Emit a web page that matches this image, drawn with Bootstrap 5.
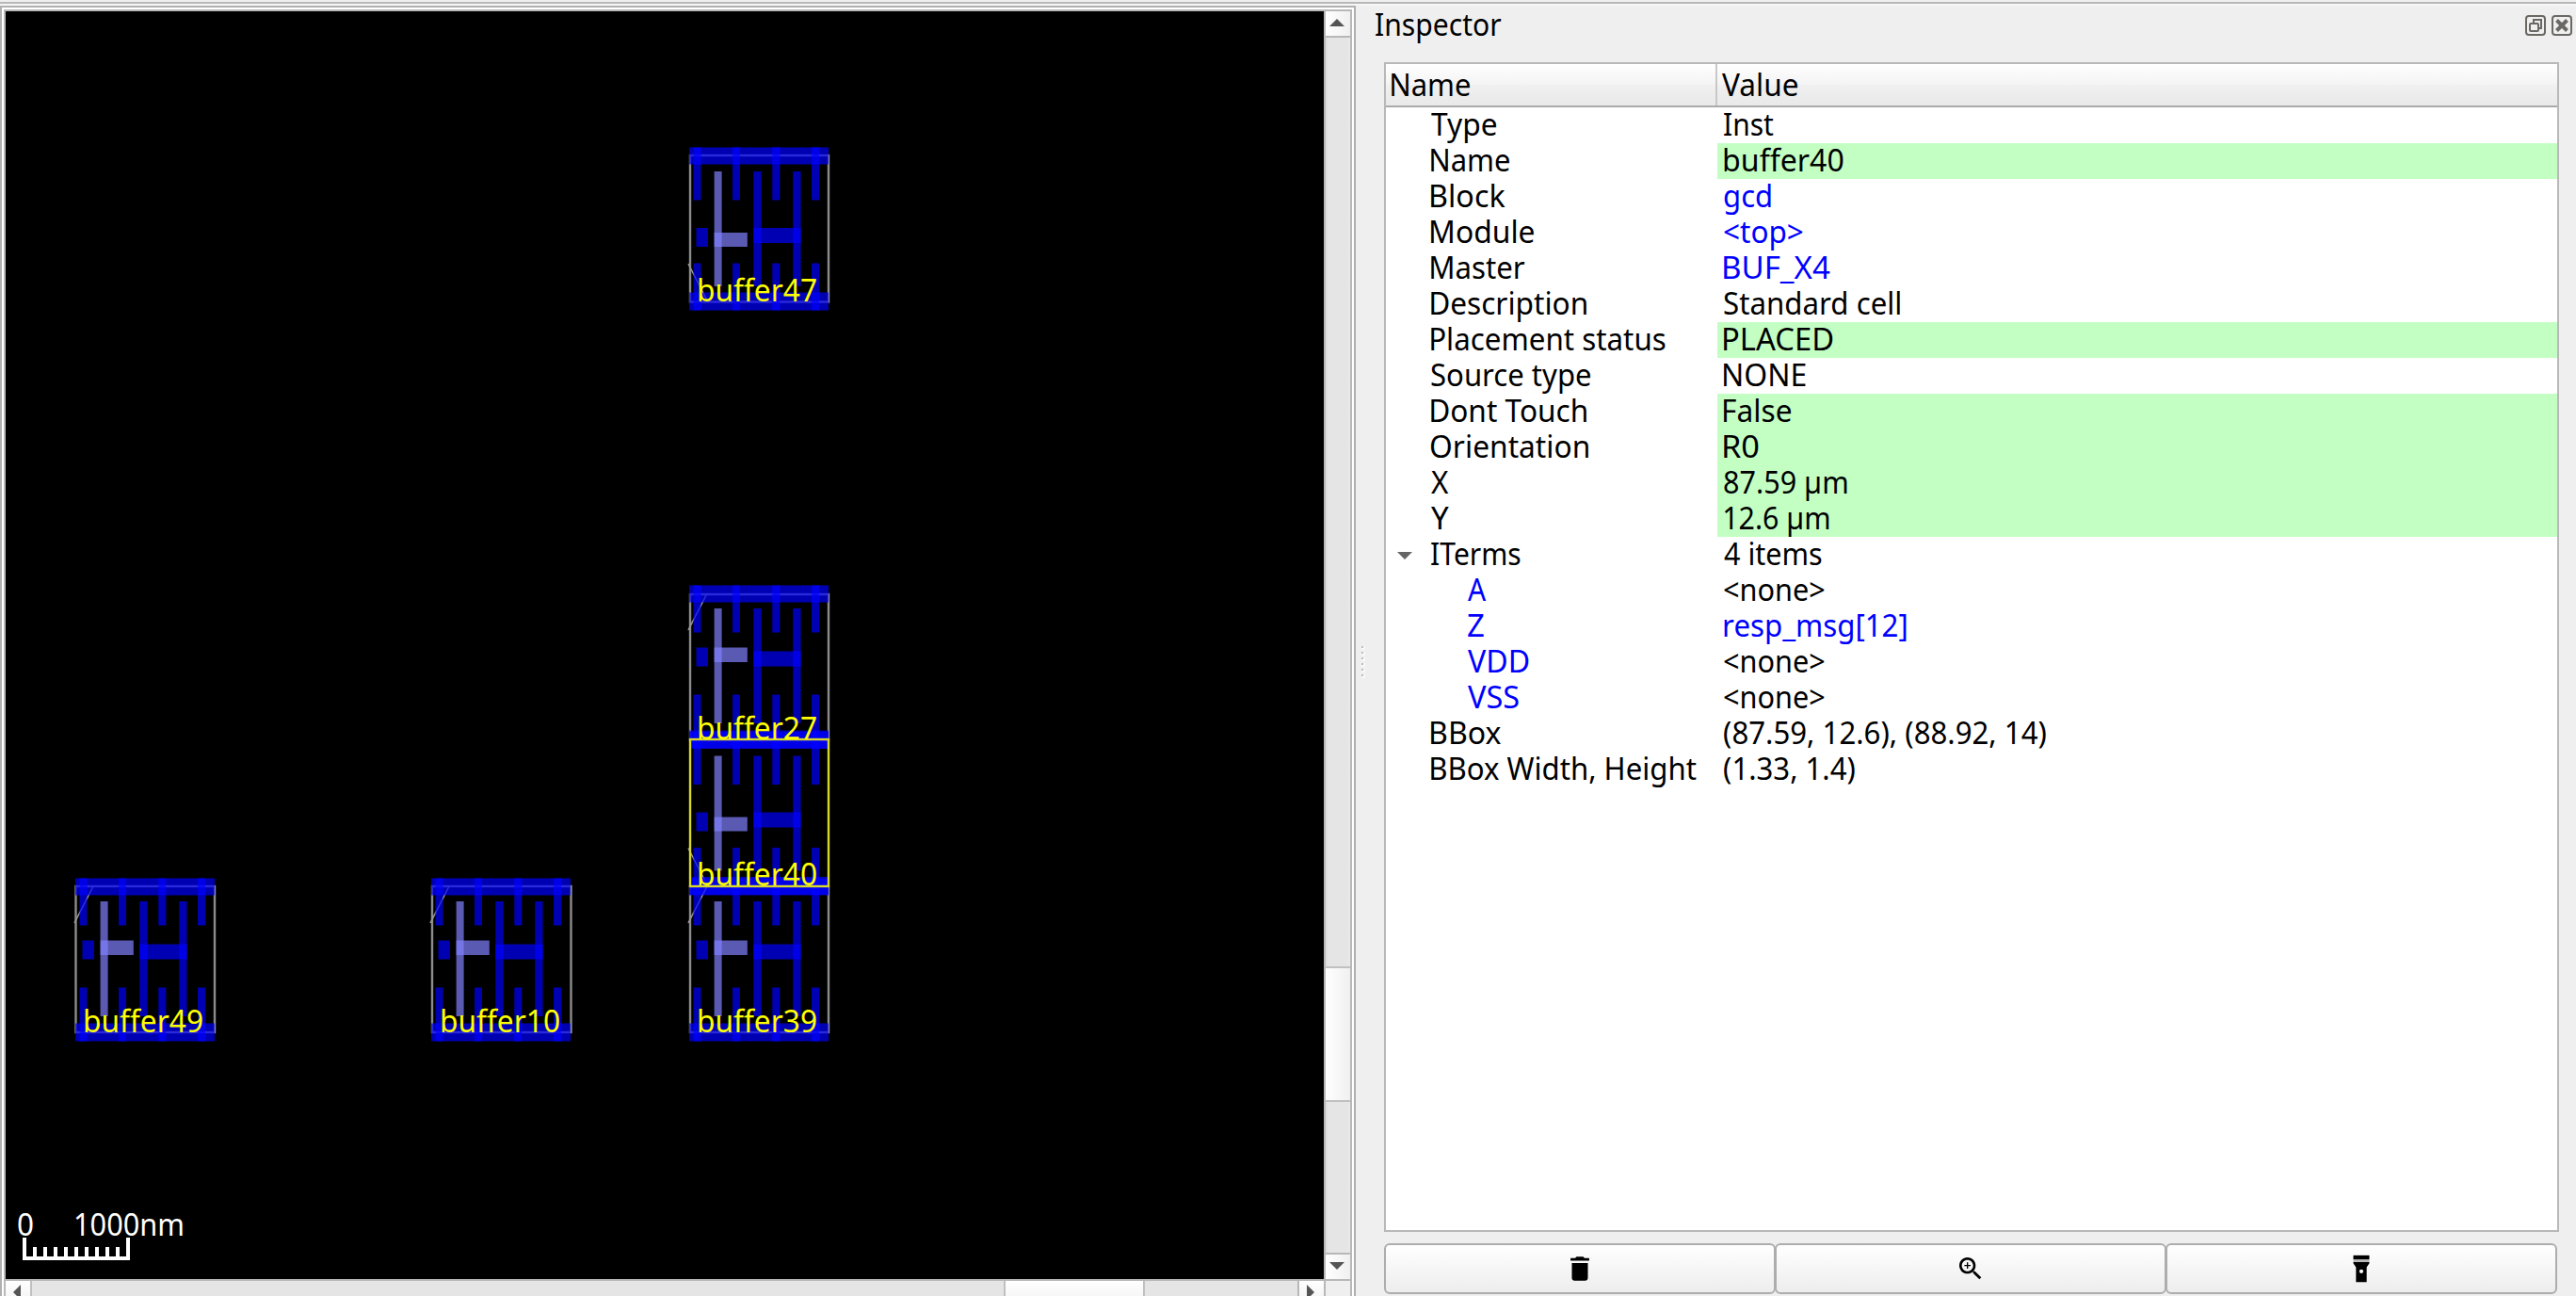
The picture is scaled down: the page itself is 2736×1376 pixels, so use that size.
<!DOCTYPE html>
<html lang="en">
<head>
<meta charset="utf-8">
<title>Layout viewer</title>
<link href="https://cdn.jsdelivr.net/npm/bootstrap@5.3.0/dist/css/bootstrap.min.css" rel="stylesheet">
<style>
  html, body { height: 100%; }
  body { background: #efefef; color: #000; font-family: "Noto Sans", "Open Sans", sans-serif; font-size: 33px; line-height: 38px; overflow: hidden; }
  .app-top { height: 6px; flex: none; border-top: 2px solid #efefef; background: linear-gradient(#b8b8b8 2px, #f6f6f6 2px); }
  .viewer { width: 1440px; height: 1390px; flex: none; border: 2px solid #b0b0b0; padding: 2px; background: #fff; }
  .viewer-frame { border: 2px solid #b8b8b8; height: 100%; }
  .viewport-pane { width: 1400px; height: 1346px; background: #000; }
  .vbar { width: 28px; border-left: 2px solid #b8b8b8; background: linear-gradient(90deg, #dedede, #e5e5e5 3px, #e5e5e5 22px, #e9e9e9); }
  .bar-btn { width: 26px; height: 26px; flex: none; }
  .vbar .bar-btn, .v-thumb { background: linear-gradient(90deg, #fff, #f0f0f0); }
  .vbar .v-top { border-bottom: 2px solid #b8b8b8; height: 28px; }
  .vbar .v-end { border-top: 2px solid #b8b8b8; height: 28px; }
  .v-gap { height: 986px; }
  .v-thumb { height: 144px; border: solid #c0c0c0; border-width: 2px 0; }
  .hbar { height: 30px; border-top: 2px solid #b8b8b8; background: #e5e5e5; }
  .hbar .bar-btn, .h-thumb { background: linear-gradient(#fff, #f0f0f0); height: 28px; }
  .h-left { border-right: 2px solid #c0c0c0; width: 28px; }
  .h-right { border: solid #b8b8b8; border-width: 0 2px; width: 30px; }
  .h-gap { width: 1032px; }
  .h-thumb { width: 150px; border: solid #c0c0c0; border-width: 0 2px; }
  .h-corner { width: 26px; background: #efefef; }
  .grip { width: 30px; padding: 680px 0 0 6px; }
  .grip i { display: block; width: 2px; height: 2px; margin-bottom: 4px; background: #bdbdbd; box-shadow: 1px 1px 0 1px #f8f8f8; }
  .dock { padding-right: 18px; }
  .dock-title { height: 60px; margin: 0 -14px 0 -12px; }
  .dock-title .fit { margin-top: 1px; }
  .dock-icons { gap: 6px; padding-top: 10px; }
  .prop-tree { height: 1242px; border: 2px solid #b8b8b8; background: #fff; }
  .tree-head { height: 46px; line-height: 44px; border-bottom: 2px solid #aaa; background: linear-gradient(#fff, #f4f4f4 50%, #f0f0f0 51%, #e9e9e9); }
  .prop-row { height: 38px; line-height: 36px; }
  .key-cell { width: 352px; flex: none; padding-left: 45px; position: relative; }
  .child .key-cell { padding-left: 84px; }
  .val-cell { padding-left: 4px; }
  .tree-head .key-cell { padding-left: 3px; border-right: 2px solid #c8c8c8; }
  .tree-head .val-cell { padding-left: 2px; }
  .editable { background: #c3ffc3; }
  .ref-link { color: #00f; }
  .fit { display: inline-block; white-space: pre; transform-origin: 0 50%; }
  .expander { position: absolute; left: 12px; top: 15px; }
  .tool-row { margin-top: 12px; height: 54px; width: 1246px; }
  .tool-row .btn { flex: 1 1 0; border: 2px solid #adadad; border-radius: 6px !important; background: linear-gradient(#fff, #ededed); padding: 0; line-height: 0; }
  .tool-row .btn + .btn { margin-left: -2px; }
</style>
</head>
<body class="d-flex flex-column">
<div class="app-top"></div>
<div class="d-flex flex-grow-1">
  <section class="viewer">
    <div class="viewer-frame">
      <div class="d-flex">
        <div class="viewport-pane">
          <svg class="d-block" width="1400" height="1346" viewBox="6 12 1400 1346" font-size="32.5" font-family="Noto Sans, sans-serif">
            <defs>
              <g id="rails" fill="#00f" fill-opacity=".7">
                <rect x="732" y="-8.5" width="148" height="18"/>
                <rect x="732" y="145.5" width="148" height="19"/>
              </g>
              <g id="cellR0">
                <path d="M731 115L752 156" stroke="#999" stroke-width="1.6"/>
                <use href="#rails"/>
                <g fill="#00f" fill-opacity=".7">
                  <path d="M736.5-8.500h8v56h-8zM778-8.500h8v56h-8zM820.3-8.500h8v56h-8zM862-8.500h8v56h-8z"/>
                  <path d="M736.5 114.5h8v50h-8zM778 114.5h8v50h-8zM820.3 114.5h8v50h-8zM862 114.5h8v50h-8z"/>
                  <rect x="739.5" y="77" width="12.5" height="20"/>
                  <rect x="800.3" y="17" width="8.2" height="122"/>
                  <rect x="842.3" y="17" width="8.2" height="122"/>
                  <rect x="800.3" y="77" width="50.2" height="16"/>
                </g>
                <g fill="#8080ff" fill-opacity=".7">
                  <rect x="758.6" y="17" width="8" height="122"/>
                  <rect x="758.6" y="82" width="35.2" height="15"/>
                </g>
              </g>
              <g id="cellMX">
                <path d="M731 39L751 0" stroke="#999" stroke-width="1.6"/>
                <use href="#rails"/>
                <g fill="#00f" fill-opacity=".7">
                  <path d="M736.5-8.500h8v50h-8zM778-8.500h8v50h-8zM820.3-8.500h8v50h-8zM862-8.500h8v50h-8z"/>
                  <path d="M736.5 107.5h8v57h-8zM778 107.5h8v57h-8zM820.3 107.5h8v57h-8zM862 107.5h8v57h-8z"/>
                  <rect x="739.5" y="57.5" width="12.5" height="20"/>
                  <rect x="800.3" y="16" width="8.2" height="122"/>
                  <rect x="842.3" y="16" width="8.2" height="122"/>
                  <rect x="800.3" y="61.5" width="50.2" height="16"/>
                </g>
                <g fill="#8080ff" fill-opacity=".7">
                  <rect x="758.6" y="16" width="8" height="122"/>
                  <rect x="758.6" y="57.5" width="35.2" height="15.5"/>
                </g>
              </g>
            </defs>
            <g fill="none" stroke="#8c8c8c" stroke-width="2.4">
              <rect x="733" y="165" width="147" height="155.5"/>
              <rect x="733" y="631" width="147" height="155"/>
              <rect x="733" y="941" width="147" height="155"/>
              <rect x="80.5" y="941" width="147.5" height="155"/>
              <rect x="459" y="941" width="147.5" height="155"/>
            </g>
            <use href="#cellR0" y="165"/>
            <use href="#cellMX" y="630"/>
            <use href="#cellR0" y="785.5"/>
            <use href="#cellMX" y="941"/>
            <use href="#cellMX" x="-652" y="941"/>
            <use href="#cellMX" x="-274" y="941"/>
            <rect x="733" y="785" width="147" height="156" fill="none" stroke="#d8d82a" stroke-width="2.4"/>
            <g fill="#ff0">
              <text x="740" y="320" textLength="128" lengthAdjust="spacingAndGlyphs">buffer47</text>
              <text x="740" y="785" textLength="128" lengthAdjust="spacingAndGlyphs">buffer27</text>
              <text x="740" y="940" textLength="128" lengthAdjust="spacingAndGlyphs">buffer40</text>
              <text x="740" y="1096" textLength="128" lengthAdjust="spacingAndGlyphs">buffer39</text>
              <text x="88" y="1096" textLength="128" lengthAdjust="spacingAndGlyphs">buffer49</text>
              <text x="467" y="1096" textLength="128" lengthAdjust="spacingAndGlyphs">buffer10</text>
            </g>
            <g fill="#fff">
              <text x="18" y="1312" textLength="18" lengthAdjust="spacingAndGlyphs">0</text>
              <text x="78" y="1312" textLength="118" lengthAdjust="spacingAndGlyphs">1000nm</text>
            </g>
            <path d="M26 1314v22h110v-22" fill="none" stroke="#fff" stroke-width="4"/>
            <path d="M37 1324v10M48 1324v10M59 1324v10M70 1324v10M81 1324v10M92 1324v10M103 1324v10M114 1324v10M125 1324v10" stroke="#fff" stroke-width="4"/>
          </svg>
        </div>
        <div class="vbar d-flex flex-column">
          <div class="bar-btn v-top"><svg class="d-block" width="26" height="26"><path d="M4 16L12 8l8 8z" fill="#555"/></svg></div>
          <div class="v-gap"></div>
          <div class="v-thumb"></div>
          <div class="bar-btn v-end mt-auto"><svg class="d-block" width="26" height="24"><path d="M4 8h16l-8 8z" fill="#555"/></svg></div>
        </div>
      </div>
      <div class="hbar d-flex">
        <div class="bar-btn h-left"><svg class="d-block" width="26" height="28"><path d="M16 4v16l-8-8z" fill="#555"/></svg></div>
        <div class="h-gap"></div>
        <div class="h-thumb"></div>
        <div class="bar-btn h-right ms-auto"><svg class="d-block" width="26" height="28"><path d="M8 4v16l8-8z" fill="#555"/></svg></div>
        <div class="h-corner"></div>
      </div>
    </div>
  </section>
  <div class="grip"><i></i><i></i><i></i><i></i><i></i><i></i></div>
  <section class="dock flex-grow-1">
    <div class="dock-title d-flex justify-content-between align-items-start">
      <span class="fit" data-w="134">Inspector</span>
      <div class="dock-icons d-flex">
        <svg width="22" height="22" fill="none" stroke="#6b6864" stroke-width="2"><rect x="1" y="1" width="20" height="20" rx="3"/><rect x="5" y="9" width="9" height="8" rx="1"/><path d="M9 8V5h8v9h-3"/></svg>
        <svg width="22" height="22" fill="none" stroke="#6b6864" stroke-width="2"><rect x="1" y="1" width="20" height="20" rx="3"/><path d="M5.500 5.500l11 11M16.500 5.500l-11 11" stroke-width="4"/></svg>
      </div>
    </div>
    <div class="prop-tree">
      <div class="tree-head d-flex"><div class="key-cell"><span class="fit" data-w="83">Name</span></div><div class="val-cell"><span class="fit" data-w="80">Value</span></div></div>
      <div class="prop-row d-flex"><div class="key-cell"><span class="fit" data-w="69">Type</span></div><div class="val-cell flex-grow-1"><span class="fit" data-w="53">Inst</span></div></div>
      <div class="prop-row d-flex"><div class="key-cell"><span class="fit" data-w="83">Name</span></div><div class="val-cell flex-grow-1 editable"><span class="fit" data-w="127">buffer40</span></div></div>
      <div class="prop-row d-flex"><div class="key-cell"><span class="fit" data-w="79">Block</span></div><div class="val-cell flex-grow-1 ref-link"><span class="fit" data-w="50">gcd</span></div></div>
      <div class="prop-row d-flex"><div class="key-cell"><span class="fit" data-w="109">Module</span></div><div class="val-cell flex-grow-1 ref-link"><span class="fit" data-w="84">&lt;top&gt;</span></div></div>
      <div class="prop-row d-flex"><div class="key-cell"><span class="fit" data-w="100">Master</span></div><div class="val-cell flex-grow-1 ref-link"><span class="fit" data-w="113">BUF_X4</span></div></div>
      <div class="prop-row d-flex"><div class="key-cell"><span class="fit" data-w="165">Description</span></div><div class="val-cell flex-grow-1"><span class="fit" data-w="187">Standard cell</span></div></div>
      <div class="prop-row d-flex"><div class="key-cell"><span class="fit" data-w="249">Placement status</span></div><div class="val-cell flex-grow-1 editable"><span class="fit" data-w="116">PLACED</span></div></div>
      <div class="prop-row d-flex"><div class="key-cell"><span class="fit" data-w="169">Source type</span></div><div class="val-cell flex-grow-1"><span class="fit" data-w="87">NONE</span></div></div>
      <div class="prop-row d-flex"><div class="key-cell"><span class="fit" data-w="165">Dont Touch</span></div><div class="val-cell flex-grow-1 editable"><span class="fit" data-w="71">False</span></div></div>
      <div class="prop-row d-flex"><div class="key-cell"><span class="fit" data-w="167">Orientation</span></div><div class="val-cell flex-grow-1 editable"><span class="fit" data-w="37">R0</span></div></div>
      <div class="prop-row d-flex"><div class="key-cell"><span class="fit" data-w="19">X</span></div><div class="val-cell flex-grow-1 editable"><span class="fit" data-w="131">87.59 µm</span></div></div>
      <div class="prop-row d-flex"><div class="key-cell"><span class="fit" data-w="19">Y</span></div><div class="val-cell flex-grow-1 editable"><span class="fit" data-w="112">12.6 µm</span></div></div>
      <div class="prop-row d-flex"><div class="key-cell"><svg class="expander" width="16" height="12"><path d="M0 1h16L8 9z" fill="#666"/></svg><span class="fit" data-w="95">ITerms</span></div><div class="val-cell flex-grow-1"><span class="fit" data-w="104">4 items</span></div></div>
      <div class="prop-row child d-flex"><div class="key-cell ref-link"><span class="fit" data-w="20">A</span></div><div class="val-cell flex-grow-1"><span class="fit" data-w="107">&lt;none&gt;</span></div></div>
      <div class="prop-row child d-flex"><div class="key-cell ref-link"><span class="fit" data-w="17">Z</span></div><div class="val-cell flex-grow-1 ref-link"><span class="fit" data-w="194">resp_msg[12]</span></div></div>
      <div class="prop-row child d-flex"><div class="key-cell ref-link"><span class="fit" data-w="65">VDD</span></div><div class="val-cell flex-grow-1"><span class="fit" data-w="107">&lt;none&gt;</span></div></div>
      <div class="prop-row child d-flex"><div class="key-cell ref-link"><span class="fit" data-w="54">VSS</span></div><div class="val-cell flex-grow-1"><span class="fit" data-w="107">&lt;none&gt;</span></div></div>
      <div class="prop-row d-flex"><div class="key-cell"><span class="fit" data-w="74">BBox</span></div><div class="val-cell flex-grow-1"><span class="fit" data-w="342">(87.59, 12.6), (88.92, 14)</span></div></div>
      <div class="prop-row d-flex"><div class="key-cell"><span class="fit" data-w="282">BBox Width, Height</span></div><div class="val-cell flex-grow-1"><span class="fit" data-w="139">(1.33, 1.4)</span></div></div>
    </div>
    <div class="tool-row btn-group d-flex">
      <button class="btn" type="button" aria-label="Delete"><svg width="34" height="34" viewBox="0 0 24 24"><path d="M6 19c0 1.100.9 2 2 2h8c1.100 0 2-.9 2-2V7.800H6V19zM19 4h-3.500l-1-1h-5l-1 1H5v2h14V4z"/></svg></button>
      <button class="btn" type="button" aria-label="Zoom to"><svg width="32" height="32" viewBox="0 0 24 24"><path d="M15.500 14h-.79l-.28-.27C15.410 12.590 16 11.110 16 9.500 16 5.910 13.090 3 9.500 3S3 5.910 3 9.500 5.910 16 9.500 16c1.610 0 3.090-.59 4.230-1.570l.27.28v.79l5 4.990L20.490 19l-4.990-5zm-6 0C7.010 14 5 11.990 5 9.500S7.010 5 9.500 5 14 7.010 14 9.500 11.990 14 9.500 14z"/><path d="M12 10h-2v2H9v-2H7V9h2V7h1v2h2v1z"/></svg></button>
      <button class="btn" type="button" aria-label="Highlight"><svg width="34" height="34" viewBox="0 0 24 24"><path d="M6 5h12v2H6z" fill="#b5b5b5"/><path d="M6 2h12v3H6z"/><path d="M6 7v1l2 3v11h8V11l2-3V7H6zm6 8.500c-.83 0-1.500-.67-1.500-1.500s.67-1.500 1.500-1.500 1.500.67 1.500 1.500-.67 1.500-1.500 1.500z" fill-rule="evenodd"/></svg></button>
    </div>
  </section>
</div>
<script src="https://cdn.jsdelivr.net/npm/bootstrap@5.3.0/dist/js/bootstrap.bundle.min.js"></script>
<script>
  // Condense each label so that its ink spans data-w pixels, starting 3px into its box.
  const pen = document.createElement('canvas').getContext('2d');
  document.querySelectorAll('.fit').forEach(el => {
    pen.font = getComputedStyle(el).font;
    const m = pen.measureText(el.textContent);
    const ink = m.actualBoundingBoxRight + m.actualBoundingBoxLeft;
    const k = el.dataset.w / ink;
    const shift = 3 + m.actualBoundingBoxLeft * k;
    el.style.transform = `translateX(${shift}px) scaleX(${k})`;
  });
</script>
</body>
</html>
